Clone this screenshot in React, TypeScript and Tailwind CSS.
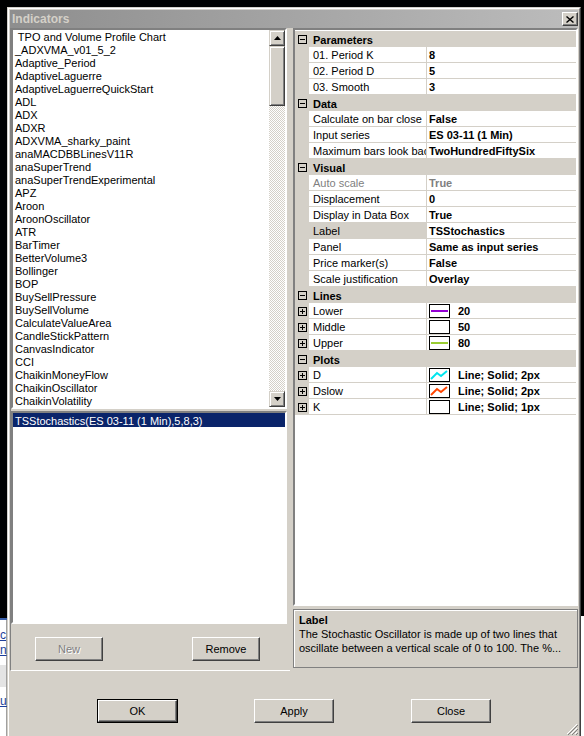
import React from 'react'

const indicators = [
  ' TPO and Volume Profile Chart',
  '_ADXVMA_v01_5_2',
  'Adaptive_Period',
  'AdaptiveLaguerre',
  'AdaptiveLaguerreQuickStart',
  'ADL',
  'ADX',
  'ADXR',
  'ADXVMA_sharky_paint',
  'anaMACDBBLinesV11R',
  'anaSuperTrend',
  'anaSuperTrendExperimental',
  'APZ',
  'Aroon',
  'AroonOscillator',
  'ATR',
  'BarTimer',
  'BetterVolume3',
  'Bollinger',
  'BOP',
  'BuySellPressure',
  'BuySellVolume',
  'CalculateValueArea',
  'CandleStickPattern',
  'CanvasIndicator',
  'CCI',
  'ChaikinMoneyFlow',
  'ChaikinOscillator',
  'ChaikinVolatility',
]

type Swatch = { type: 'line' | 'plot'; color?: string }

type GridRow =
  | { kind: 'cat'; label: string }
  | {
      kind: 'prop'
      name: string
      value: string
      expandable?: boolean
      disabled?: boolean
      selected?: boolean
      swatch?: Swatch
    }

const rows: GridRow[] = [
  { kind: 'cat', label: 'Parameters' },
  { kind: 'prop', name: '01. Period K', value: '8' },
  { kind: 'prop', name: '02. Period D', value: '5' },
  { kind: 'prop', name: '03. Smooth', value: '3' },
  { kind: 'cat', label: 'Data' },
  { kind: 'prop', name: 'Calculate on bar close', value: 'False' },
  { kind: 'prop', name: 'Input series', value: 'ES 03-11 (1 Min)' },
  { kind: 'prop', name: 'Maximum bars look back', value: 'TwoHundredFiftySix' },
  { kind: 'cat', label: 'Visual' },
  { kind: 'prop', name: 'Auto scale', value: 'True', disabled: true },
  { kind: 'prop', name: 'Displacement', value: '0' },
  { kind: 'prop', name: 'Display in Data Box', value: 'True' },
  { kind: 'prop', name: 'Label', value: 'TSStochastics', selected: true },
  { kind: 'prop', name: 'Panel', value: 'Same as input series' },
  { kind: 'prop', name: 'Price marker(s)', value: 'False' },
  { kind: 'prop', name: 'Scale justification', value: 'Overlay' },
  { kind: 'cat', label: 'Lines' },
  { kind: 'prop', name: 'Lower', value: '20', expandable: true, swatch: { type: 'line', color: '#9400d3' } },
  { kind: 'prop', name: 'Middle', value: '50', expandable: true, swatch: { type: 'line' } },
  { kind: 'prop', name: 'Upper', value: '80', expandable: true, swatch: { type: 'line', color: '#9acd32' } },
  { kind: 'cat', label: 'Plots' },
  { kind: 'prop', name: 'D', value: 'Line; Solid; 2px', expandable: true, swatch: { type: 'plot', color: '#00e5ee' } },
  { kind: 'prop', name: 'Dslow', value: 'Line; Solid; 2px', expandable: true, swatch: { type: 'plot', color: '#ff4500' } },
  { kind: 'prop', name: 'K', value: 'Line; Solid; 1px', expandable: true, swatch: { type: 'plot' } },
]

// classic raised 3d edge
const raised =
  'border border-t-white border-l-white border-r-[#404040] border-b-[#404040] shadow-[inset_-1px_-1px_0_#808080]'
const scrollBtn =
  'border border-t-[#d4d0c8] border-l-[#d4d0c8] border-r-[#404040] border-b-[#404040] shadow-[inset_1px_1px_0_#fff,inset_-1px_-1px_0_#808080] bg-[#d4d0c8]'
const sunken =
  'border-2 border-t-[#808080] border-l-[#808080] border-r-white border-b-white'

function Expander({ open }: { open: boolean }) {
  return (
    <svg width="9" height="9" viewBox="0 0 9 9" className="shrink-0">
      <rect x="0.5" y="0.5" width="8" height="8" fill="none" stroke="#000" />
      <path d="M2 4.5h5" stroke="#000" />
      {!open && <path d="M4.5 2v5" stroke="#000" />}
    </svg>
  )
}

function SwatchBox({ swatch }: { swatch: Swatch }) {
  return (
    <svg width="21" height="14" viewBox="0 0 21 14" className="shrink-0">
      <rect x="0.5" y="0.5" width="20" height="13" fill="#fff" stroke="#000" />
      {swatch.color && swatch.type === 'line' && (
        <path d="M2 7h17" stroke={swatch.color} strokeWidth="2" />
      )}
      {swatch.color && swatch.type === 'plot' && (
        <polyline
          points="2,11 8,5 12,8 18,3"
          fill="none"
          stroke={swatch.color}
          strokeWidth="2"
        />
      )}
    </svg>
  )
}

function Arrow({ up }: { up?: boolean }) {
  return (
    <svg width="7" height="4" viewBox="0 0 7 4">
      <path d={up ? 'M3.5 0L7 4H0z' : 'M0 0h7L3.5 4z'} fill="#000" />
    </svg>
  )
}

function WinButton({
  label,
  disabled,
  primary,
  className,
}: {
  label: string
  disabled?: boolean
  primary?: boolean
  className?: string
}) {
  const face = (
    <div
      className={`flex h-full w-full items-center justify-center bg-[#d4d0c8] ${raised} ${
        disabled ? 'text-[#808080] [text-shadow:1px_1px_0_#fff]' : 'text-black'
      }`}
    >
      {label}
    </div>
  )
  if (primary) {
    return <div className={`h-[24px] border border-black ${className ?? ''}`}>{face}</div>
  }
  return <div className={`h-[24px] ${className ?? ''}`}>{face}</div>
}

function PropertyGrid() {
  return (
    <div className={`flex h-[578px] flex-col bg-white pt-px ${sunken}`}>
      <div className="flex flex-col">
        {rows.map((row, i) =>
          row.kind === 'cat' ? (
            <div key={i} className="flex h-[16px] items-center bg-[#d4d0c8]">
              <div className="flex w-[14px] justify-center pl-px">
                <Expander open />
              </div>
              <span className="pl-[4px] pt-px font-bold leading-[16px]">{row.label}</span>
            </div>
          ) : (
            <div key={i} className="flex h-[16px]">
              <div className="flex w-[14px] shrink-0 items-center justify-center bg-[#d4d0c8] pl-px">
                {row.expandable && <Expander open={false} />}
              </div>
              <div
                className={`w-[117px] shrink-0 overflow-hidden whitespace-nowrap border-b border-[#d4d0c8] pl-[4px] pt-px leading-[15px] ${
                  row.selected ? 'bg-[#d4d0c8]' : ''
                } ${row.disabled ? 'text-[#808080]' : ''}`}
              >
                {row.name}
              </div>
              <div
                className={`flex min-w-0 flex-1 items-center gap-[8px] whitespace-nowrap border-b border-l border-[#d4d0c8] pl-[2px] font-bold leading-[15px] ${
                  row.disabled ? 'text-[#808080]' : ''
                }`}
              >
                {row.swatch && <SwatchBox swatch={row.swatch} />}
                <span className="pt-[2px]">{row.value}</span>
              </div>
            </div>
          ),
        )}
      </div>
    </div>
  )
}

export default function App() {
  return (
    <div className="flex h-[736px] w-[584px] overflow-hidden bg-black font-['Liberation_Sans',Arial,sans-serif] text-[11px] text-black">
      {/* page behind the dialog */}
      <div className="flex w-[7px] shrink-0 flex-col overflow-hidden">
        <div className="h-[618px] shrink-0 bg-black" />
        <div className="h-[2px] shrink-0 bg-[#3a5fa8]" />
        <div className="flex h-[45px] shrink-0 flex-col border-r border-[#a0a0a0] bg-white pt-[8px] text-[12px] leading-[15px] text-[#1d3f9a] underline">
          <span>c</span>
          <span>n</span>
        </div>
        <div className="h-[22px] shrink-0 border-r border-[#a0a0a0] bg-[#e4e4e4]" />
        <div className="flex-1 border-r border-[#a0a0a0] bg-white pt-[7px] text-[12px] leading-[15px] text-[#1d3f9a] underline">
          ur
        </div>
      </div>

      {/* dialog window */}
      <div className="mt-[7px] flex w-[574px] shrink-0 flex-col border-l border-r border-t border-l-[#d4d0c8] border-r-[#404040] border-t-[#d4d0c8] bg-[#d4d0c8]">
        <div className="flex flex-1 flex-col border-l border-r border-t border-l-white border-r-[#808080] border-t-white px-px pt-px">
          {/* title bar */}
          <div className="flex h-[18px] shrink-0 items-center justify-between bg-gradient-to-r from-[#8e8e8e] to-[#bcbcbc] pl-[2px]">
            <span className="text-[12px] font-bold text-[#d4d0c8]">Indicators</span>
            <div className={`flex h-[14px] w-[16px] items-center justify-center ${raised} bg-[#d4d0c8]`}>
              <svg width="8" height="7" viewBox="0 0 8 7">
                <path d="M0.5 0.5l7 6M7.5 0.5l-7 6" stroke="#000" strokeWidth="1.4" />
              </svg>
            </div>
          </div>

          {/* panels */}
          <div className="flex h-[643px] shrink-0 gap-[3px]">
            {/* left: available + applied indicators */}
            <div className="flex w-[280px] shrink-0 flex-col border-b border-l border-b-white border-l-[#808080] pb-[8px] pr-[3px]">
              <div className={`flex h-[381px] shrink-0 bg-white ${sunken}`}>
                <div className="flex min-w-0 flex-1 flex-col overflow-hidden pl-[2px] pt-px leading-[13px]">
                  {indicators.map((name) => (
                    <div key={name} className="h-[13px] shrink-0 whitespace-pre">
                      {name}
                    </div>
                  ))}
                </div>
                <div className="flex w-[16px] shrink-0 flex-col">
                  <div className={`flex h-[16px] items-center justify-center ${scrollBtn}`}>
                    <Arrow up />
                  </div>
                  <div className={`h-[60px] ${scrollBtn}`} />
                  <div className="flex-1 bg-[repeating-conic-gradient(#d4d0c8_0%_25%,#ffffff_0%_50%)] bg-[length:2px_2px]" />
                  <div className={`flex h-[16px] items-center justify-center ${scrollBtn}`}>
                    <Arrow />
                  </div>
                </div>
              </div>

              <div className={`mt-[2px] h-[213px] shrink-0 bg-white ${sunken}`}>
                <div className="h-[14px] whitespace-nowrap bg-[#0a246a] pl-[2px] pt-px leading-[14px] text-white">
                  TSStochastics(ES 03-11 (1 Min),5,8,3)
                </div>
              </div>

              <div className="mt-[13px] flex pl-[24px]">
                <WinButton label="New" disabled className="w-[68px]" />
                <WinButton label="Remove" className="ml-[89px] w-[68px]" />
              </div>
            </div>

            {/* right: properties + help */}
            <div className="flex min-w-0 flex-1 flex-col">
              <PropertyGrid />
              <div className="mt-[3px] h-[59px] shrink-0 border border-[#808080] px-[5px] pt-[3px] leading-[14px] shadow-[inset_1px_1px_0_#fff]">
                <div className="font-bold">Label</div>
                <div className="whitespace-nowrap">The Stochastic Oscillator is made up of two lines that</div>
                <div className="whitespace-nowrap">oscillate between a vertical scale of 0 to 100. The %...</div>
              </div>
            </div>
          </div>

          {/* dialog buttons */}
          <div className="flex flex-1 items-start pt-[28px]">
            <WinButton label="OK" primary className="ml-[87px] w-[81px]" />
            <WinButton label="Apply" className="ml-[76px] w-[80px]" />
            <WinButton label="Close" className="ml-[77px] w-[80px]" />
            <div className="ml-auto self-end pb-[1px]">
              <svg width="12" height="12" viewBox="0 0 12 12">
                <path d="M11 1L1 11M11 5L5 11M11 9L9 11" stroke="#fff" strokeWidth="1" />
                <path d="M12 2L2 12M12 6L6 12M12 10L10 12" stroke="#808080" strokeWidth="1" />
              </svg>
            </div>
          </div>
        </div>
      </div>

      <div className="flex w-[3px] shrink-0 flex-col">
        <div className="h-[616px] bg-black" />
        <div className="flex-1 bg-white" />
      </div>
    </div>
  )
}
